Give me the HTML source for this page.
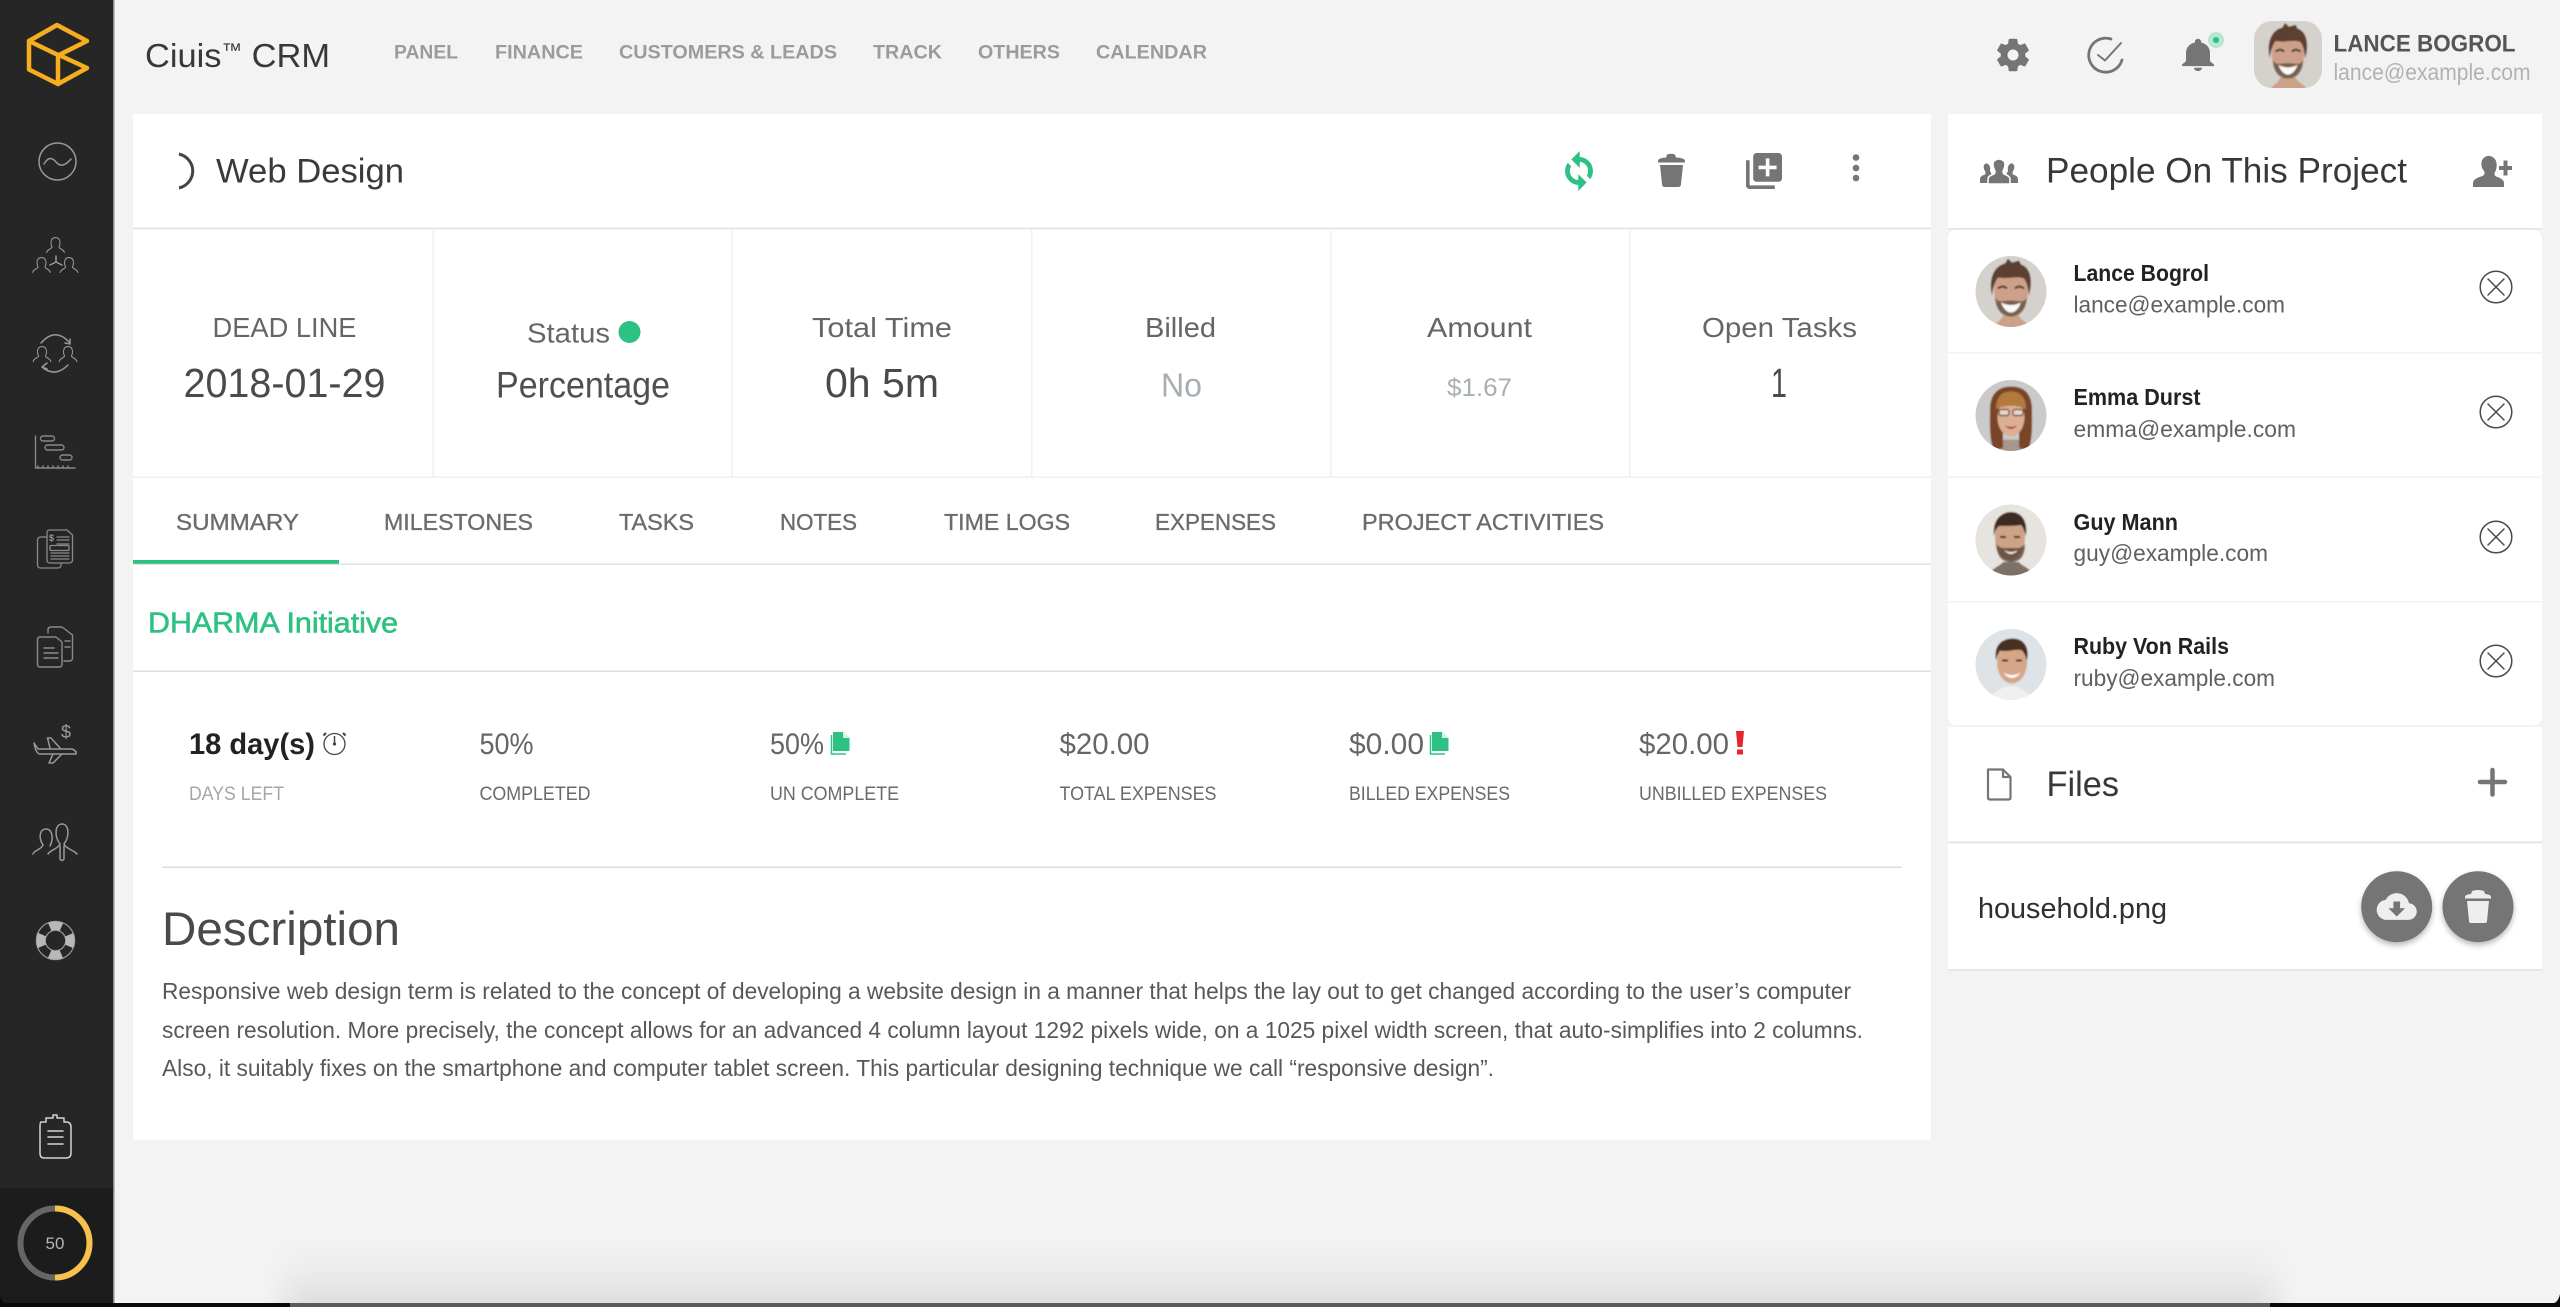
<!DOCTYPE html>
<html lang="en"><head><meta charset="utf-8"><title>Ciuis CRM</title>
<style>
html,body{margin:0;padding:0;width:2560px;height:1307px;overflow:hidden;background:#f3f3f3}
svg{display:block}
text{font-family:"Liberation Sans",Arial,sans-serif;white-space:pre}
.b{font-weight:700}
.ic{fill:none;stroke:#999;stroke-width:1.500;stroke-linecap:round;stroke-linejoin:round}
</style></head><body>
<svg width="2560" height="1307" viewBox="0 0 2560 1307" xmlns="http://www.w3.org/2000/svg">
<defs>
<linearGradient id="sh" x1="0" y1="0" x2="0" y2="1"><stop offset="0" stop-color="#000" stop-opacity="0"/><stop offset=".5" stop-color="#000" stop-opacity=".025"/><stop offset="1" stop-color="#000" stop-opacity=".085"/></linearGradient>
<filter id="bl" x="-3%" y="0" width="106%" height="100%"><feGaussianBlur stdDeviation="14 0"/></filter>
<filter id="soft"><feGaussianBlur stdDeviation=".8"/></filter>
<filter id="ds" x="-30%" y="-30%" width="160%" height="170%"><feDropShadow dx="0" dy="3" stdDeviation="3" flood-color="#000" flood-opacity=".28"/></filter>
<path id="person" d="M-13,14C-12,9-6,9-5,6C-8,0-7,-8 0,-8C7,-8 8,0 5,6C6,9 12,9 13,14"/>
<clipPath id="cav"><circle r="35.500"/></clipPath>
<clipPath id="ctop"><rect x="2254" y="21" width="68" height="67" rx="18"/></clipPath>
<g id="lance" filter="url(#soft)">
<rect x="-40" y="-40" width="80" height="80" fill="#d5d2ce"/>
<path d="M-20,40C-18,32-10,30-8,24H8C10,30 20,32 22,40Z" fill="#cba288"/>
<ellipse cx="0" cy="-1" rx="17" ry="25" fill="#cda089"/>
<path d="M-19,4C-23,-14-16,-26-6,-28L-3,-33L1,-29L8,-31L10,-27C20,-24 22,-10 18,4C17,-4 16,-9 13,-13C6,-16-4,-12-13,-14C-16,-10-18,-4-19,4Z" fill="#5b4131"/>
<path d="M-16,6C-15,20-8,25 0,25C8,25 15,20 16,6C12,12 8,9 0,9C-8,9-12,12-16,6Z" fill="#5a4535" opacity=".72"/>
<path d="M-10,11Q0,16 10,11Q6,21 0,21Q-6,21-10,11Z" fill="#fbfaf8"/>
<path d="M-13,-3Q-8,-7-4,-3M4,-3Q8,-7 13,-3" fill="none" stroke="#3c2a20" stroke-width="2"/>
</g>
<g id="emma" filter="url(#soft)">
<rect x="-40" y="-40" width="80" height="80" fill="#cbcaca"/>
<path d="M-20,40C-18,30-10,28-7,24H7C10,28 18,30 22,40Z" fill="#a7978c"/>
<path d="M-21,-8C-20,-26-8,-29 0,-29C10,-29 20,-25 21,-8C21,10 22,22 17,36L8,32V0H-8V32L-17,36C-22,22-21,10-21,-8Z" fill="#7a4526"/>
<ellipse cx="0" cy="2" rx="13.500" ry="19" fill="#dcae94"/>
<path d="M-15,-6C-15,-22-6,-24 0,-24C8,-24 15,-20 15,-6C8,-11-8,-11-15,-6Z" fill="#b3793c"/>
<rect x="-12" y="-6" width="10" height="6" rx="2" fill="#ead7cc" stroke="#4a3b36" stroke-width="1.200"/><rect x="2" y="-6" width="10" height="6" rx="2" fill="#ead7cc" stroke="#4a3b36" stroke-width="1.200"/>
<path d="M-6,10Q0,13 6,10Q0,17-6,10Z" fill="#b02e2a"/>
</g>
<g id="guy" filter="url(#soft)">
<rect x="-40" y="-40" width="80" height="80" fill="#e7e3de"/>
<path d="M-24,40C-22,28-10,26-8,22H8C10,26 22,28 24,40Z" fill="#7d7066"/>
<ellipse cx="-1" cy="-2" rx="15" ry="22" fill="#cda286"/>
<path d="M-17,-4C-19,-22-8,-28 0,-28C10,-28 17,-20 15,-4C13,-10 12,-13 10,-15C4,-14-6,-14-12,-14C-15,-12-16,-8-17,-4Z" fill="#3c2c22"/>
<path d="M-15,4C-14,19-7,22 0,22C7,22 14,19 14,4C10,9 6,8 0,8C-6,8-11,9-15,4Z" fill="#4c3a2d" opacity=".75"/>
<path d="M-7,10Q0,14 7,10Q0,18-7,10Z" fill="#f3eee8"/>
<path d="M-11,-3H-5M3,-3H9" stroke="#33221a" stroke-width="2"/>
</g>
<g id="ruby" filter="url(#soft)">
<rect x="-40" y="-40" width="80" height="80" fill="#dde3e6"/>
<path d="M-24,40C-22,28-10,26-7,22H7C10,26 22,28 24,40Z" fill="#f0f0ee"/>
<ellipse cx="1" cy="-2" rx="15" ry="21" fill="#d6a687"/>
<path d="M-15,-4C-18,-22-6,-26 2,-26C12,-26 19,-18 16,-4C14,-10 13,-12 11,-14C5,-16-4,-12-11,-14C-13,-11-14,-8-15,-4Z" fill="#4a2f20"/>
<path d="M-8,8Q1,13 10,8Q1,19-8,8Z" fill="#fff"/>
<path d="M-9,-4H-3M5,-4H11" stroke="#33221a" stroke-width="2"/>
</g>
<g id="xc" fill="none" stroke="#4a4a4a" stroke-width="1.500"><circle r="15.800"/><path d="M-8,-8L8,8M8,-8L-8,8" stroke-linecap="round"/></g>
</defs>

<rect width="2560" height="1307" fill="#f3f3f3"/>
<!-- bottom shadow -->
<rect x="285" y="1235" width="1990" height="68" fill="url(#sh)" filter="url(#bl)"/>
<rect x="0" y="1303" width="2560" height="4" fill="#0a0a0a"/>
<rect x="290" y="1303" width="1980" height="4" fill="#595c5c"/>
<path d="M2560,1294V1304H2550Q2558,1304 2560,1294Z" fill="#0a0a0a"/>

<!-- sidebar -->
<rect width="113" height="1303" fill="#262626"/>
<rect y="1188" width="113" height="115" fill="#1c1c1c"/>
<rect x="113" width="1.500" height="1303" fill="#8a8a8a"/>
<path d="M0,1295V1304H9Q1,1303 0,1295Z" fill="#0a0a0a"/>
<g fill="none" stroke="#f6ae1f" stroke-width="4.500" stroke-linejoin="round" stroke-linecap="round">
<path d="M29,41L57,25L87,41L59,55L87,68L58,84L29,69.500Z"/><path d="M29,41L58,55V84"/></g>
<g class="ic">
<circle cx="57.500" cy="161.500" r="18.500"/><path d="M44,164C48,157 52,157 56,162C60,167 65,166 71,159"/>
<use href="#person" transform="translate(55.500 243) scale(.68)"/><use href="#person" transform="translate(41.500 263) scale(.68)"/><use href="#person" transform="translate(69 263) scale(.68)"/>
<path d="M56,256V262M56,262L50,265M56,262L62,265"/>
<use href="#person" transform="translate(42 352) scale(.68)"/><use href="#person" transform="translate(68 352) scale(.68)"/>
<path d="M41,343Q55,327 69,342M65,343L70,344L70,339M68,365Q55,378 42,367M42,367L47,363M42,367L47,369"/>
<path d="M35.500,436V468H75M38,468v-2M43,468v-2M48,468v-2M53,468v-2M58,468v-2M63,468v-2M68,468v-2" stroke-width="1.400" stroke="#888"/>
<rect x="40.500" y="436" width="14" height="5" rx="2.500" stroke-width="1.400" stroke="#888"/><rect x="45" y="445" width="19" height="5" rx="2.500" stroke-width="1.400" stroke="#888"/><rect x="60" y="455" width="12" height="5" rx="2.500" stroke-width="1.400" stroke="#888"/>
<g stroke="#8a8a8a" stroke-width="1.300">
<path d="M47,537H41Q37.500,537 37.500,541V565Q37.500,568 41,568H58Q61,568 61,565V564"/>
<path d="M50,530H67L72.500,535V560Q72.500,563 69,563H50Q47,563 47,560V533Q47,530 50,530Z"/>
<path d="M57,537H69M57,540H69M57,544H69M51,559H69M51,556H69M51,553H69"/><rect x="50" y="545.500" width="19" height="5" rx="1"/></g>
<text x="49" y="541" font-size="9" fill="#9c9c9c" stroke="none" class="b">$</text>
<g stroke="#8a8a8a" stroke-width="1.400">
<path d="M48,633V630Q48,627 51,627H62L72.500,635V658Q72.500,661 69,661H64"/><path d="M40,637H56L62,642V664Q62,667 59,667H40Q37.500,667 37.500,664V640Q37.500,637 40,637Z"/><path d="M44,648H54M44,653H58M44,658H58M65,641H70M65,647H70"/></g>
<path d="M34,743L38,749H72Q77,751 76,754H40Q36,754 34,743ZM50,748L47.500,738H51L60,748M62,754L53,763H49L53,754"/>
<text x="61" y="738" font-size="18" fill="#9c9c9c" stroke="none">$</text>
<path d="M33,854C34,850 41,850 43,845C38,837 40,829 46,829C52,829 54,838 50,846"/>
<path d="M48,854C50,850 58,849 60,844C54,836 55,824 62,824C69,824 70,836 64,844C66,849 74,850 77,854"/>
<path d="M60,846L60,859Q62,862 64,859L64,846"/>
<path d="M41,1122H46V1118H53V1115H57V1118H64V1122H66Q71,1122 71,1127V1153Q71,1158 66,1158H44Q40,1158 40,1153V1127Q40,1122 41,1122Z" stroke="#d4d4d4"/>
<path d="M48,1131H63M48,1137H63M48,1144H63" stroke="#d4d4d4"/>
</g>
<g fill="none">
<circle cx="55.500" cy="940.500" r="19.200" stroke="#999" stroke-width="1.200"/>
<circle cx="55.500" cy="940.500" r="10.200" stroke="#999" stroke-width="1.200"/>
<circle cx="55.500" cy="940.500" r="14.700" stroke="#b8b8b8" stroke-width="8.500" stroke-dasharray="12 11.090" stroke-dashoffset="6"/>
</g>
<circle cx="55" cy="1243" r="34.500" fill="none" stroke="#666" stroke-width="6"/>
<path d="M55,1208.500A34.500,34.500 0 0 1 55,1277.500" fill="none" stroke="#f8c14e" stroke-width="6"/>
<text x="55" y="1249" font-size="17" fill="#b5b5b5" text-anchor="middle">50</text>

<!-- top bar -->
<text x="145" y="67" font-size="33.500" fill="#383838" textLength="185" lengthAdjust="spacingAndGlyphs">Ciuis<tspan font-size="20" dy="-10">™</tspan><tspan dy="10"> CRM</tspan></text>
<g font-size="19.500" fill="#9b9b9b" class="b">
<text x="394" y="58.500" textLength="64" lengthAdjust="spacingAndGlyphs">PANEL</text>
<text x="495" y="58.500" textLength="88" lengthAdjust="spacingAndGlyphs">FINANCE</text>
<text x="619" y="58.500" textLength="218" lengthAdjust="spacingAndGlyphs">CUSTOMERS &amp; LEADS</text>
<text x="873" y="58.500" textLength="69" lengthAdjust="spacingAndGlyphs">TRACK</text>
<text x="978" y="58.500" textLength="82" lengthAdjust="spacingAndGlyphs">OTHERS</text>
<text x="1096" y="58.500" textLength="111" lengthAdjust="spacingAndGlyphs">CALENDAR</text>
</g>
<path transform="translate(1993.200 35.200) scale(1.650)" fill="#757575" stroke="#757575" stroke-width=".5" d="M19.140 12.940c.04-.3.06-.61.06-.94 0-.32-.02-.64-.07-.94l2.030-1.580c.18-.14.23-.41.12-.61l-1.920-3.320c-.12-.22-.37-.29-.59-.22l-2.390.96c-.5-.38-1.030-.7-1.620-.94l-.36-2.540c-.04-.24-.24-.41-.48-.41h-3.840c-.24 0-.43.17-.47.41l-.36 2.540c-.59.24-1.130.57-1.620.94l-2.390-.96c-.22-.08-.47 0-.59.22L2.740 8.870c-.12.21-.08.47.12.61l2.030 1.580c-.05.3-.09.63-.09.94s.02.64.07.94l-2.030 1.580c-.18.14-.23.41-.12.61l1.920 3.320c.12.22.37.29.59.22l2.390-.96c.5.38 1.030.7 1.620.94l.36 2.540c.05.24.24.41.48.41h3.840c.24 0 .44-.17.47-.41l.36-2.540c.59-.24 1.130-.56 1.620-.94l2.390.96c.22.08.47 0 .59-.22l1.920-3.320c.12-.22.07-.47-.12-.61l-2.010-1.580zM12 15.600c-1.980 0-3.600-1.620-3.600-3.600s1.620-3.600 3.600-3.600 3.600 1.620 3.600 3.600-1.620 3.600-3.600 3.600z"/>
<g fill="none" stroke="#757575" stroke-width="2.800" stroke-linecap="round" stroke-linejoin="round"><path d="M2111,39A17,17 0 1 0 2122,60"/><path d="M2098,55L2105,60.500L2121,43" stroke-width="2"/></g>
<path transform="translate(2174 34.800) scale(2 1.650)" fill="#757575" d="M12 22c1.100 0 2-.9 2-2h-4c0 1.100.89 2 2 2zm6-6v-5c0-3.070-1.640-5.640-4.500-6.320V4c0-.83-.67-1.500-1.500-1.500s-1.500.67-1.500 1.500v.68C7.630 5.360 6 7.920 6 11v5l-2 2v1h16v-1l-2-2z"/>
<ellipse cx="2216" cy="40" rx="8" ry="8" fill="#b8e6d3"/><circle cx="2216" cy="40" r="3" fill="#2dc183"/>
<g clip-path="url(#ctop)"><use href="#lance" transform="translate(2288 54.500) scale(.96)"/></g>
<text x="2333.500" y="51.500" font-size="24" fill="#555" class="b" textLength="182" lengthAdjust="spacingAndGlyphs">LANCE BOGROL</text>
<text x="2333.500" y="80" font-size="23" fill="#b2b2b2" textLength="197" lengthAdjust="spacingAndGlyphs">lance@example.com</text>

<!-- main card -->
<rect x="133" y="114" width="1798" height="1026" fill="#fff"/>
<rect x="133" y="227.500" width="1798" height="2" fill="#e6e6e6"/>
<path d="M179,154A18,17.500 0 0 1 179,188" fill="none" stroke="#444" stroke-width="3"/>
<text x="216" y="182.500" font-size="34.500" fill="#3a3a3a" textLength="188" lengthAdjust="spacingAndGlyphs">Web Design</text>
<path transform="translate(1559.200 151.200) scale(1.650)" fill="#2dc183" stroke="#2dc183" stroke-width=".9" d="M12 4V1L8 5l4 4V6c3.310 0 6 2.690 6 6 0 1.010-.25 1.970-.7 2.800l1.460 1.460C19.540 15.030 20 13.570 20 12c0-4.420-3.580-8-8-8zm0 14c-3.310 0-6-2.690-6-6 0-1.010.25-1.970.7-2.800L5.240 7.740C4.460 8.970 4 10.430 4 12c0 4.420 3.580 8 8 8v3l4-4-4-4v3z"/>
<path fill="#757575" d="M1658,161Q1658,158 1666,157.500L1667,154.500Q1671,153 1675,154.500L1676,157.500Q1685,158 1685,161V162.500H1658ZM1660,165H1683L1681,184Q1681,187 1678,187H1665Q1662,187 1662,184Z"/>
<path transform="translate(1742.400 149.400) scale(1.800)" fill="#757575" d="M4 6H2v14c0 1.100.9 2 2 2h14v-2H4V6zm16-4H8c-1.100 0-2 .9-2 2v12c0 1.100.9 2 2 2h12c1.100 0 2-.9 2-2V4c0-1.100-.9-2-2-2zm-1 9h-4v4h-2v-4H9V9h4V5h2v4h4v2z"/>
<g fill="#757575"><circle cx="1856" cy="157.500" r="3.300"/><circle cx="1856" cy="168" r="3.300"/><circle cx="1856" cy="178" r="3.300"/></g>

<!-- stat row -->
<g fill="#f0f0f0"><rect x="133" y="476.500" width="1798" height="1.500"/><rect x="432.500" y="230" width="1.500" height="248"/><rect x="731" y="230" width="1.500" height="248"/><rect x="1031" y="230" width="1.500" height="248"/><rect x="1330" y="230" width="1.500" height="248"/><rect x="1629" y="230" width="1.500" height="248"/></g>
<g font-size="28" fill="#666">
<text x="212.500" y="337" textLength="144" lengthAdjust="spacingAndGlyphs">DEAD LINE</text>
<text x="527" y="342.500" textLength="83" lengthAdjust="spacingAndGlyphs">Status</text>
<text x="812" y="337" textLength="140" lengthAdjust="spacingAndGlyphs">Total Time</text>
<text x="1145" y="337" textLength="71" lengthAdjust="spacingAndGlyphs">Billed</text>
<text x="1427" y="337" textLength="105" lengthAdjust="spacingAndGlyphs">Amount</text>
<text x="1702" y="337" textLength="155" lengthAdjust="spacingAndGlyphs">Open Tasks</text>
</g>
<circle cx="629.500" cy="332" r="11" fill="#2dc183"/>
<g font-size="41" fill="#4a4a4a">
<text x="183.500" y="397" textLength="202" lengthAdjust="spacingAndGlyphs">2018-01-29</text>
<text x="825" y="397" textLength="114" lengthAdjust="spacingAndGlyphs">0h 5m</text>
<text x="1771" y="397" textLength="16" lengthAdjust="spacingAndGlyphs">1</text>
</g>
<text x="496" y="397.500" font-size="37" fill="#505050" textLength="174" lengthAdjust="spacingAndGlyphs">Percentage</text>
<text x="1161" y="396.500" font-size="33" fill="#a6aeb2" textLength="41" lengthAdjust="spacingAndGlyphs">No</text>
<text x="1447" y="396" font-size="25" fill="#a8b0b4" textLength="65" lengthAdjust="spacingAndGlyphs">$1.67</text>

<!-- tabs -->
<rect x="133" y="563.500" width="1798" height="1.500" fill="#e2e2e2"/>
<rect x="133" y="560" width="206" height="3.800" fill="#2dc183"/>
<g font-size="23.500" fill="#6c6c6c" stroke="#6c6c6c" stroke-width=".35">
<text x="176" y="530" textLength="123" lengthAdjust="spacingAndGlyphs">SUMMARY</text>
<text x="384" y="530" textLength="149" lengthAdjust="spacingAndGlyphs">MILESTONES</text>
<text x="619" y="530" textLength="75" lengthAdjust="spacingAndGlyphs">TASKS</text>
<text x="780" y="530" textLength="77" lengthAdjust="spacingAndGlyphs">NOTES</text>
<text x="944" y="530" textLength="126" lengthAdjust="spacingAndGlyphs">TIME LOGS</text>
<text x="1155" y="530" textLength="121" lengthAdjust="spacingAndGlyphs">EXPENSES</text>
<text x="1362" y="530" textLength="242" lengthAdjust="spacingAndGlyphs">PROJECT ACTIVITIES</text>
</g>
<text x="148" y="632.500" font-size="29" fill="#2dc183" stroke="#2dc183" stroke-width=".6" textLength="250" lengthAdjust="spacingAndGlyphs">DHARMA Initiative</text>
<rect x="133" y="670.500" width="1798" height="1.500" fill="#dfdfdf"/>

<!-- summary stats -->
<text x="189" y="754" font-size="29.500" fill="#222" class="b" textLength="126" lengthAdjust="spacingAndGlyphs">18 day(s)</text>
<g fill="none" stroke="#444" stroke-width="1.300"><circle cx="334.500" cy="744" r="10.500"/><path d="M334.500,736V744" stroke-width="1.500"/><path d="M326,733L323.500,735.500M343,733L345.500,735.500" stroke-width="2.200"/></g><circle cx="334.500" cy="744" r="1.600" fill="#444"/>
<g font-size="29.500" fill="#666">
<text x="479.500" y="754" textLength="54" lengthAdjust="spacingAndGlyphs">50%</text>
<text x="770" y="754" textLength="54" lengthAdjust="spacingAndGlyphs">50%</text>
<text x="1059.500" y="754" textLength="90" lengthAdjust="spacingAndGlyphs">$20.00</text>
<text x="1349" y="754" textLength="75" lengthAdjust="spacingAndGlyphs">$0.00</text>
<text x="1639" y="754" textLength="90" lengthAdjust="spacingAndGlyphs">$20.00</text>
</g>
<path d="M833,732H843L849.500,738V751H833Z" fill="#2dc183"/><path d="M831.500,735V754H846" fill="none" stroke="#2dc183" stroke-width="1.500"/><path d="M843,732V738H849.500Z" fill="#d8f4e8"/>
<path d="M1432,732H1442L1448.500,738V751H1432Z" fill="#2dc183"/><path d="M1430.500,735V754H1445" fill="none" stroke="#2dc183" stroke-width="1.500"/><path d="M1442,732V738H1448.500Z" fill="#d8f4e8"/>
<path d="M1736,731H1744L1742.500,747H1737.500Z" fill="#e8262b"/><rect x="1737" y="749.500" width="6" height="5" fill="#e8262b"/>
<text x="189" y="800" font-size="19.500" fill="#a6a6a6" textLength="95" lengthAdjust="spacingAndGlyphs">DAYS LEFT</text>
<g font-size="19.500" fill="#6a6a6a">
<text x="479.500" y="800" textLength="111" lengthAdjust="spacingAndGlyphs">COMPLETED</text>
<text x="770" y="800" textLength="129" lengthAdjust="spacingAndGlyphs">UN COMPLETE</text>
<text x="1059.500" y="800" textLength="157" lengthAdjust="spacingAndGlyphs">TOTAL EXPENSES</text>
<text x="1349" y="800" textLength="161" lengthAdjust="spacingAndGlyphs">BILLED EXPENSES</text>
<text x="1639" y="800" textLength="188" lengthAdjust="spacingAndGlyphs">UNBILLED EXPENSES</text>
</g>
<rect x="162" y="866.500" width="1740" height="1.500" fill="#dcdcdc"/>
<text x="162" y="945" font-size="47" fill="#4a4a4a" textLength="238" lengthAdjust="spacingAndGlyphs">Description</text>
<g font-size="23" fill="#585858">
<text x="162" y="999" textLength="1689" lengthAdjust="spacingAndGlyphs">Responsive web design term is related to the concept of developing a website design in a manner that helps the lay out to get changed according to the user’s computer</text>
<text x="162" y="1038" textLength="1701" lengthAdjust="spacingAndGlyphs">screen resolution. More precisely, the concept allows for an advanced 4 column layout 1292 pixels wide, on a 1025 pixel width screen, that auto-simplifies into 2 columns.</text>
<text x="162" y="1076" textLength="1332" lengthAdjust="spacingAndGlyphs">Also, it suitably fixes on the smartphone and computer tablet screen. This particular designing technique we call “responsive design”.</text>
</g>

<!-- right column -->
<rect x="1948" y="114" width="594" height="114" fill="#fff"/>
<rect x="1948" y="228" width="594" height="1.500" fill="#e4e4e4"/>
<g fill="#757575">
<path d="M1980,183V179Q1980,176 1985,174.500Q1986,173 1985,171Q1983,168 1984,165Q1986,162 1988,164Q1991,166 1990,171L1992,175V183Z"/>
<path d="M2018,183V179Q2018,176 2013,174.500Q2012,173 2013,171Q2015,168 2014,165Q2012,162 2010,164Q2007,166 2008,171L2006,175V183Z"/>
<path d="M1988,184V179Q1988,176 1994,174Q1996,172 1994,169Q1992,164 1994,161Q1999,157 2004,161Q2006,164 2004,169Q2002,172 2004,174Q2010,176 2010,179V184Z" stroke="#fff" stroke-width="1.500"/>
</g>
<text x="2046" y="182.500" font-size="35" fill="#383838" textLength="361" lengthAdjust="spacingAndGlyphs">People On This Project</text>
<path fill="#757575" d="M2473,187V183Q2473,179 2481,176.500Q2486,175 2484,171Q2480,166 2482,160Q2487,153 2494,158Q2498,162 2496,170Q2493,175 2496,176.500Q2504,179 2504,183V187ZM2503.500,166V160.500H2507.500V166H2512V170H2507.500V175.500H2503.500V170H2499V166Z"/>

<rect x="1948" y="230" width="594" height="495" rx="8" fill="#fff"/>
<g fill="#f2f2f2"><rect x="1948" y="352" width="594" height="1.500"/><rect x="1948" y="476.500" width="594" height="1.500"/><rect x="1948" y="601" width="594" height="1.500"/></g>
<g clip-path="url(#cav)" transform="translate(2011 291.500)"><use href="#lance"/></g>
<g clip-path="url(#cav)" transform="translate(2011 415.500)"><use href="#emma"/></g>
<g clip-path="url(#cav)" transform="translate(2011 540)"><use href="#guy"/></g>
<g clip-path="url(#cav)" transform="translate(2011 664.500)"><use href="#ruby"/></g>
<g font-size="23" fill="#222" class="b">
<text x="2073.500" y="281" textLength="135.500" lengthAdjust="spacingAndGlyphs">Lance Bogrol</text>
<text x="2073.500" y="405" textLength="127" lengthAdjust="spacingAndGlyphs">Emma Durst</text>
<text x="2073.500" y="530" textLength="104.500" lengthAdjust="spacingAndGlyphs">Guy Mann</text>
<text x="2073.500" y="654" textLength="155.500" lengthAdjust="spacingAndGlyphs">Ruby Von Rails</text>
</g>
<g font-size="23" fill="#606060">
<text x="2073.500" y="312.500" textLength="211.500" lengthAdjust="spacingAndGlyphs">lance@example.com</text>
<text x="2073.500" y="437" textLength="222.500" lengthAdjust="spacingAndGlyphs">emma@example.com</text>
<text x="2073.500" y="561" textLength="194.500" lengthAdjust="spacingAndGlyphs">guy@example.com</text>
<text x="2073.500" y="686" textLength="201.500" lengthAdjust="spacingAndGlyphs">ruby@example.com</text>
</g>
<use href="#xc" transform="translate(2496 287)"/><use href="#xc" transform="translate(2496 412)"/><use href="#xc" transform="translate(2496 537)"/><use href="#xc" transform="translate(2496 661)"/>

<rect x="1948" y="727" width="594" height="242" fill="#fff"/>
<rect x="1948" y="841.500" width="594" height="1.800" fill="#e4e4e4"/>
<rect x="1948" y="969" width="594" height="1.800" fill="#e4e4e4"/>
<path d="M1988,769.500H2003L2010.500,777V797.500Q2010.500,799.500 2008.500,799.500H1990Q1988,799.500 1988,797.500ZM2003,769.500V777H2010.500" fill="none" stroke="#757575" stroke-width="2.200" stroke-linejoin="round"/>
<text x="2046.500" y="796" font-size="35" fill="#383838" textLength="72.500" lengthAdjust="spacingAndGlyphs">Files</text>
<path d="M2480,782H2505M2492.500,770V794.500" stroke="#757575" stroke-width="4.500" stroke-linecap="round"/>
<text x="1978" y="918" font-size="29" fill="#2f2f2f" textLength="189" lengthAdjust="spacingAndGlyphs">household.png</text>
<circle cx="2396.700" cy="906.700" r="35.500" fill="#757575" filter="url(#ds)"/>
<circle cx="2478" cy="906.700" r="35.500" fill="#757575" filter="url(#ds)"/>
<path transform="translate(2376.700 886.500) scale(1.670)" fill="#eee" d="M19.350 10.040C18.670 6.590 15.640 4 12 4 9.110 4 6.600 5.640 5.350 8.040 2.340 8.360 0 10.910 0 14c0 3.310 2.690 6 6 6h13c2.760 0 5-2.240 5-5 0-2.640-2.050-4.780-4.650-4.960zM17 13l-5 5-5-5h3V9h4v4h3z"/>
<path fill="#eee" d="M2465,897Q2465,894.500 2471,894L2472,891Q2478,889 2484,891L2485,894Q2491,894.500 2491,897V898.500H2465ZM2467,901H2489L2487,921Q2487,923 2485,923H2471Q2469,923 2469,921Z"/>
</svg>
</body></html>
